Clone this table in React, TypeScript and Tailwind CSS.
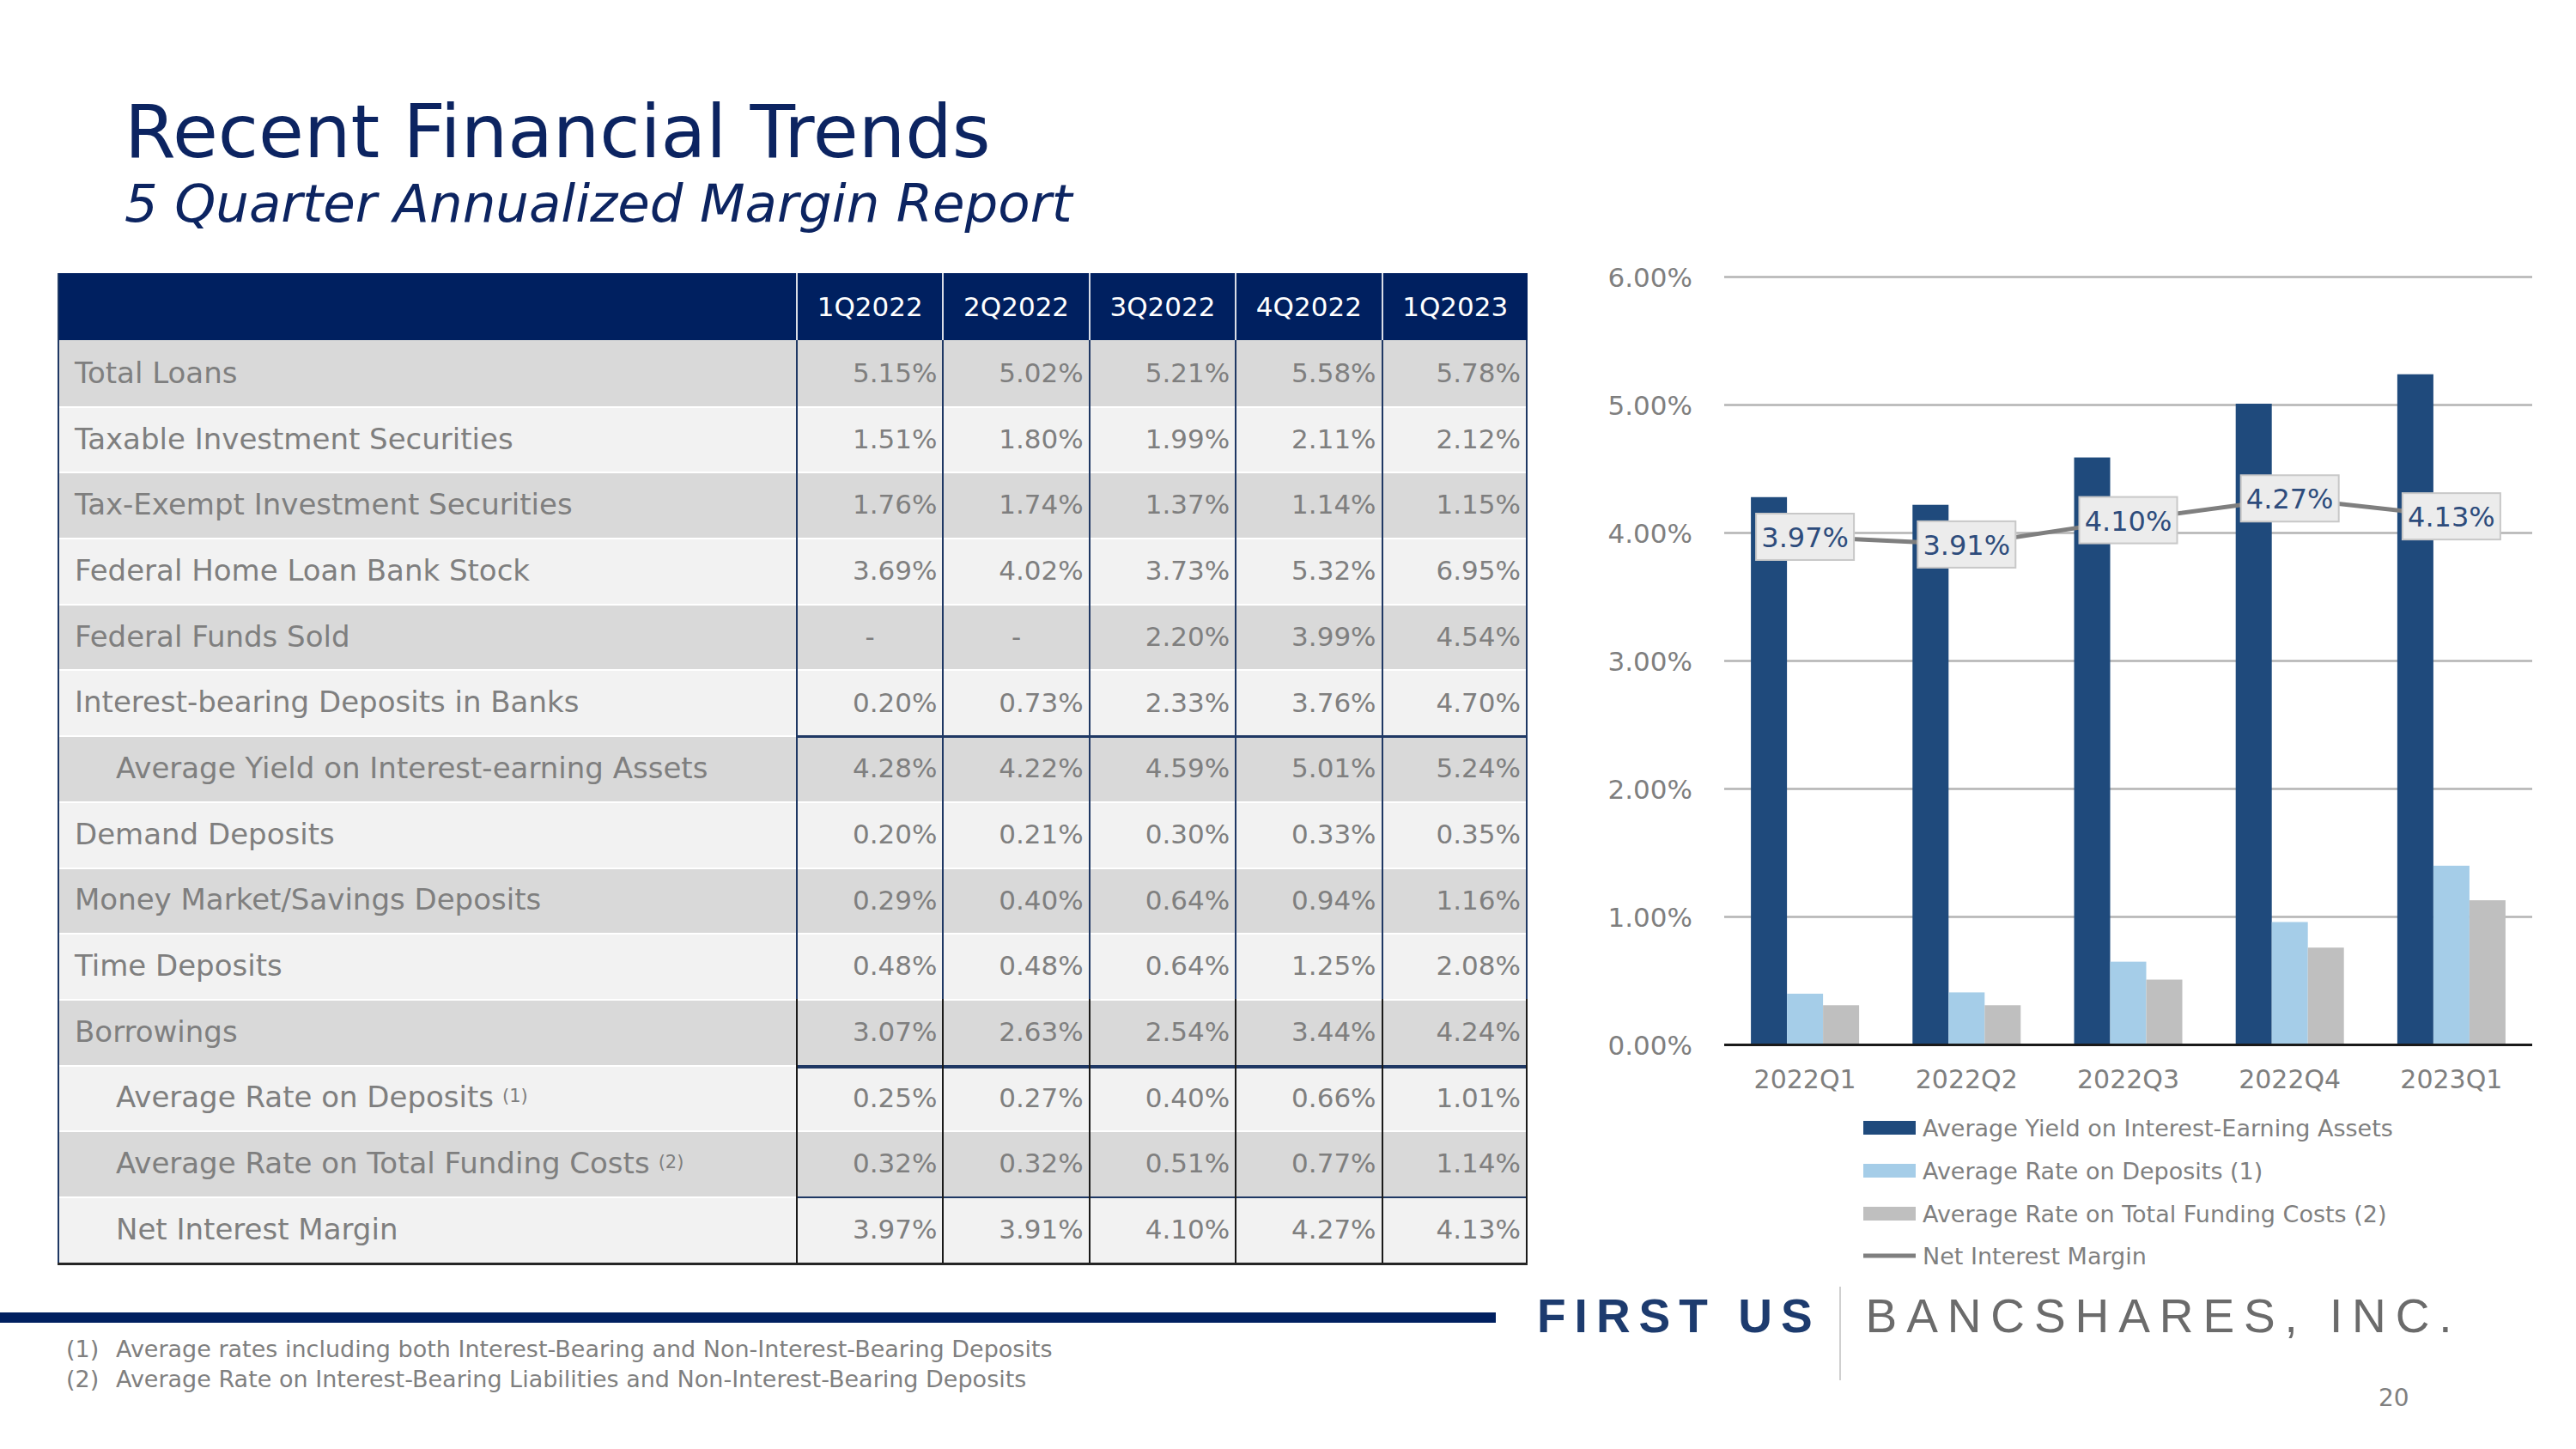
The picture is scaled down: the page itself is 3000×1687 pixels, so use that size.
import React from "react";

type Row = {
  label: string;
  sup?: string;
  indent?: boolean;
  v: string[];
};

const rows: Row[] = [
  { label: "Total Loans", v: ["5.15%", "5.02%", "5.21%", "5.58%", "5.78%"] },
  { label: "Taxable Investment Securities", v: ["1.51%", "1.80%", "1.99%", "2.11%", "2.12%"] },
  { label: "Tax-Exempt Investment Securities", v: ["1.76%", "1.74%", "1.37%", "1.14%", "1.15%"] },
  { label: "Federal Home Loan Bank Stock", v: ["3.69%", "4.02%", "3.73%", "5.32%", "6.95%"] },
  { label: "Federal Funds Sold", v: ["-", "-", "2.20%", "3.99%", "4.54%"] },
  { label: "Interest-bearing Deposits in Banks", v: ["0.20%", "0.73%", "2.33%", "3.76%", "4.70%"] },
  { label: "Average Yield on Interest-earning Assets", indent: true, v: ["4.28%", "4.22%", "4.59%", "5.01%", "5.24%"] },
  { label: "Demand Deposits", v: ["0.20%", "0.21%", "0.30%", "0.33%", "0.35%"] },
  { label: "Money Market/Savings Deposits", v: ["0.29%", "0.40%", "0.64%", "0.94%", "1.16%"] },
  { label: "Time Deposits", v: ["0.48%", "0.48%", "0.64%", "1.25%", "2.08%"] },
  { label: "Borrowings", v: ["3.07%", "2.63%", "2.54%", "3.44%", "4.24%"] },
  { label: "Average Rate on Deposits", sup: "(1)", indent: true, v: ["0.25%", "0.27%", "0.40%", "0.66%", "1.01%"] },
  { label: "Average Rate on Total Funding Costs", sup: "(2)", indent: true, v: ["0.32%", "0.32%", "0.51%", "0.77%", "1.14%"] },
  { label: "Net Interest Margin", indent: true, v: ["3.97%", "3.91%", "4.10%", "4.27%", "4.13%"] },
];

const headers = ["1Q2022", "2Q2022", "3Q2022", "4Q2022", "1Q2023"];

function dataShadow(i: number): string {
  if (i === 6) return "shadow-[inset_0_3px_0_#1f3864]";
  if (i === 11) return "shadow-[inset_0_4px_0_#1f3864]";
  if (i === 13) return "shadow-[inset_0_2px_0_#1f3864]";
  if (i === 0) return "";
  return "shadow-[inset_0_2px_0_#ffffff]";
}

function Table() {
  return (
    <div className="w-[1712px] border-b-[3px] border-[#262626]">
      <div className="grid grid-cols-[860px_repeat(5,170.4px)] h-[78px] bg-[#002060]">
        <div className="border-l-2 border-[#1f3864]" />
        {headers.map((h) => (
          <div
            key={h}
            className="flex items-center justify-center border-l-2 border-[#d9dde6] text-white text-[31px]"
          >
            {h}
          </div>
        ))}
      </div>
      {rows.map((r, i) => {
        const bg = i % 2 === 0 ? "bg-[#d9d9d9]" : "bg-[#f2f2f2]";
        const bc = i >= 10 ? "border-[#1a1a1a]" : "border-[#1f3864]";
        const labelShadow = i === 0 ? "" : "shadow-[inset_0_2px_0_#ffffff]";
        return (
          <div key={r.label} className="grid grid-cols-[860px_repeat(5,170.4px)] h-[76.7px]">
            <div
              className={`flex items-center border-l-2 border-[#1f3864] ${bg} ${labelShadow} ${
                r.indent ? "pl-[66px]" : "pl-[18px]"
              } text-[34px] text-[#7f7f7f]`}
            >
              <span>
                {r.label}
                {r.sup ? (
                  <sup className="text-[21px] relative top-[-6px] ml-[10px]">{r.sup}</sup>
                ) : null}
              </span>
            </div>
            {r.v.map((v, j) => (
              <div
                key={j}
                className={`flex items-center ${
                  v === "-" ? "justify-center" : "justify-end pr-[6px]"
                } border-l-2 ${j === 4 ? "border-r-2" : ""} ${bc} ${bg} ${dataShadow(i)} text-[31px] text-[#7f7f7f]`}
              >
                {v}
              </div>
            ))}
          </div>
        );
      })}
    </div>
  );
}

const dark = [4.28, 4.22, 4.59, 5.01, 5.24];
const light = [0.4, 0.41, 0.65, 0.96, 1.4];
const gray = [0.31, 0.31, 0.51, 0.76, 1.13];
const nim = [3.97, 3.91, 4.1, 4.27, 4.13];
const cats = ["2022Q1", "2022Q2", "2022Q3", "2022Q4", "2023Q1"];

const Y0 = 1216.5;
const PER = 149.0;
const X0 = 2008;
const X1 = 2949;
const CW = (X1 - X0) / 5;
const yOf = (v: number) => Y0 - v * PER;

function Chart() {
  const centers = cats.map((_, i) => X0 + CW * (i + 0.5));
  const ticks = [0, 1, 2, 3, 4, 5, 6];
  return (
    <svg width={1221} height={1190} viewBox="1779 300 1221 1190" className="block shrink-0">
      {ticks.map((t) =>
        t === 0 ? null : (
          <line key={t} x1={X0} x2={X1} y1={yOf(t)} y2={yOf(t)} stroke="#b3b3b3" strokeWidth={2.5} />
        )
      )}
      {ticks.map((t) => (
        <text
          key={"l" + t}
          x={1971}
          y={yOf(t)}
          textAnchor="end"
          dominantBaseline="central"
          fontSize={31}
          fill="#7f7f7f"
          fontFamily="'DejaVu Sans', sans-serif"
        >
          {t.toFixed(2)}%
        </text>
      ))}
      {centers.map((cx, i) => (
        <g key={"b" + i}>
          <rect x={cx - 63} y={yOf(dark[i])} width={42} height={dark[i] * PER} fill="#1f4a7c" />
          <rect x={cx - 21} y={yOf(light[i])} width={42} height={light[i] * PER} fill="#a5cde8" />
          <rect x={cx + 21} y={yOf(gray[i])} width={42} height={gray[i] * PER} fill="#bfbfbf" />
        </g>
      ))}
      <line x1={X0} x2={X1} y1={Y0} y2={Y0} stroke="#1a1a1a" strokeWidth={3} />
      <polyline
        points={centers.map((cx, i) => `${cx},${yOf(nim[i])}`).join(" ")}
        fill="none"
        stroke="#7f7f7f"
        strokeWidth={5}
      />
      {centers.map((cx, i) => (
        <g key={"d" + i}>
          <rect
            x={cx - 57}
            y={yOf(nim[i]) - 27}
            width={114}
            height={54}
            fill="#ececec"
            stroke="#c8c8c8"
            strokeWidth={2}
          />
          <text
            x={cx}
            y={yOf(nim[i]) + 1}
            textAnchor="middle"
            dominantBaseline="central"
            fontSize={32}
            fill="#2e4c7c"
            fontFamily="'DejaVu Sans', sans-serif"
          >
            {nim[i].toFixed(2)}%
          </text>
        </g>
      ))}
      {centers.map((cx, i) => (
        <text
          key={"x" + i}
          x={cx}
          y={1256}
          textAnchor="middle"
          dominantBaseline="central"
          fontSize={30}
          fill="#7f7f7f"
          fontFamily="'DejaVu Sans', sans-serif"
        >
          {cats[i]}
        </text>
      ))}
      {[
        { t: "Average Yield on Interest-Earning Assets", c: "#1f4a7c", y: 1313, line: false },
        { t: "Average Rate on Deposits (1)", c: "#a5cde8", y: 1363, line: false },
        { t: "Average Rate on Total Funding Costs (2)", c: "#bfbfbf", y: 1413, line: false },
        { t: "Net Interest Margin", c: "#7f7f7f", y: 1462, line: true },
      ].map((l) => (
        <g key={l.t}>
          {l.line ? (
            <rect x={2170} y={l.y - 2.5} width={61} height={5} fill={l.c} />
          ) : (
            <rect x={2170} y={l.y - 8} width={61} height={16} fill={l.c} />
          )}
          <text
            x={2239}
            y={l.y}
            dominantBaseline="central"
            fontSize={27}
            fill="#7f7f7f"
            fontFamily="'DejaVu Sans', sans-serif"
          >
            {l.t}
          </text>
        </g>
      ))}
    </svg>
  );
}

export default function App() {
  return (
    <div
      className="w-[3000px] h-[1687px] bg-white overflow-hidden"
      style={{ fontFamily: "'DejaVu Sans', 'Liberation Sans', sans-serif" }}
    >
      <div className="h-[300px] pt-[110px] pl-[145px] text-[#0c2461]">
        <div className="text-[86px] leading-[86px]">Recent Financial Trends</div>
        <div className="mt-[10px] text-[61px] leading-[62px] italic">5 Quarter Annualized Margin Report</div>
      </div>
      <div className="flex h-[1190px]">
        <div className="ml-[67px] mt-[18px]">
          <Table />
        </div>
        <Chart />
      </div>
      <div className="flex">
        <div className="w-[1742px] flex flex-col">
          <div className="mt-[38px] h-[12px] bg-[#002060]" />
          <div className="mt-[13px] pl-[77px] text-[27px] leading-[35px] text-[#7f7f7f]">
            <div className="flex">
              <span className="w-[58px]">(1)</span>
              <span>Average rates including both Interest-Bearing and Non-Interest-Bearing Deposits</span>
            </div>
            <div className="flex">
              <span className="w-[58px]">(2)</span>
              <span>Average Rate on Interest-Bearing Liabilities and Non-Interest-Bearing Deposits</span>
            </div>
          </div>
        </div>
        <div className="ml-[48px] flex flex-col">
          <div className="mt-[8px] flex items-start">
            <div
              className="mt-[7px] text-[55px] leading-[55px] font-bold text-[#1d3b6e] tracking-[10px]"
              style={{ fontFamily: "'Liberation Sans', sans-serif" }}
            >
              FIRST US
            </div>
            <div className="ml-[21px] w-[2px] h-[109px] bg-[#cfcfcf]" />
            <div
              className="ml-[29px] mt-[7px] text-[55px] leading-[55px] text-[#6b6b6b] tracking-[10.9px]"
              style={{ fontFamily: "'Liberation Sans', sans-serif" }}
            >
              BANCSHARES, INC.
            </div>
          </div>
          <div className="mt-[7px] ml-[980px] text-[28px] leading-[28px] text-[#7f7f7f]">20</div>
        </div>
      </div>
    </div>
  );
}
